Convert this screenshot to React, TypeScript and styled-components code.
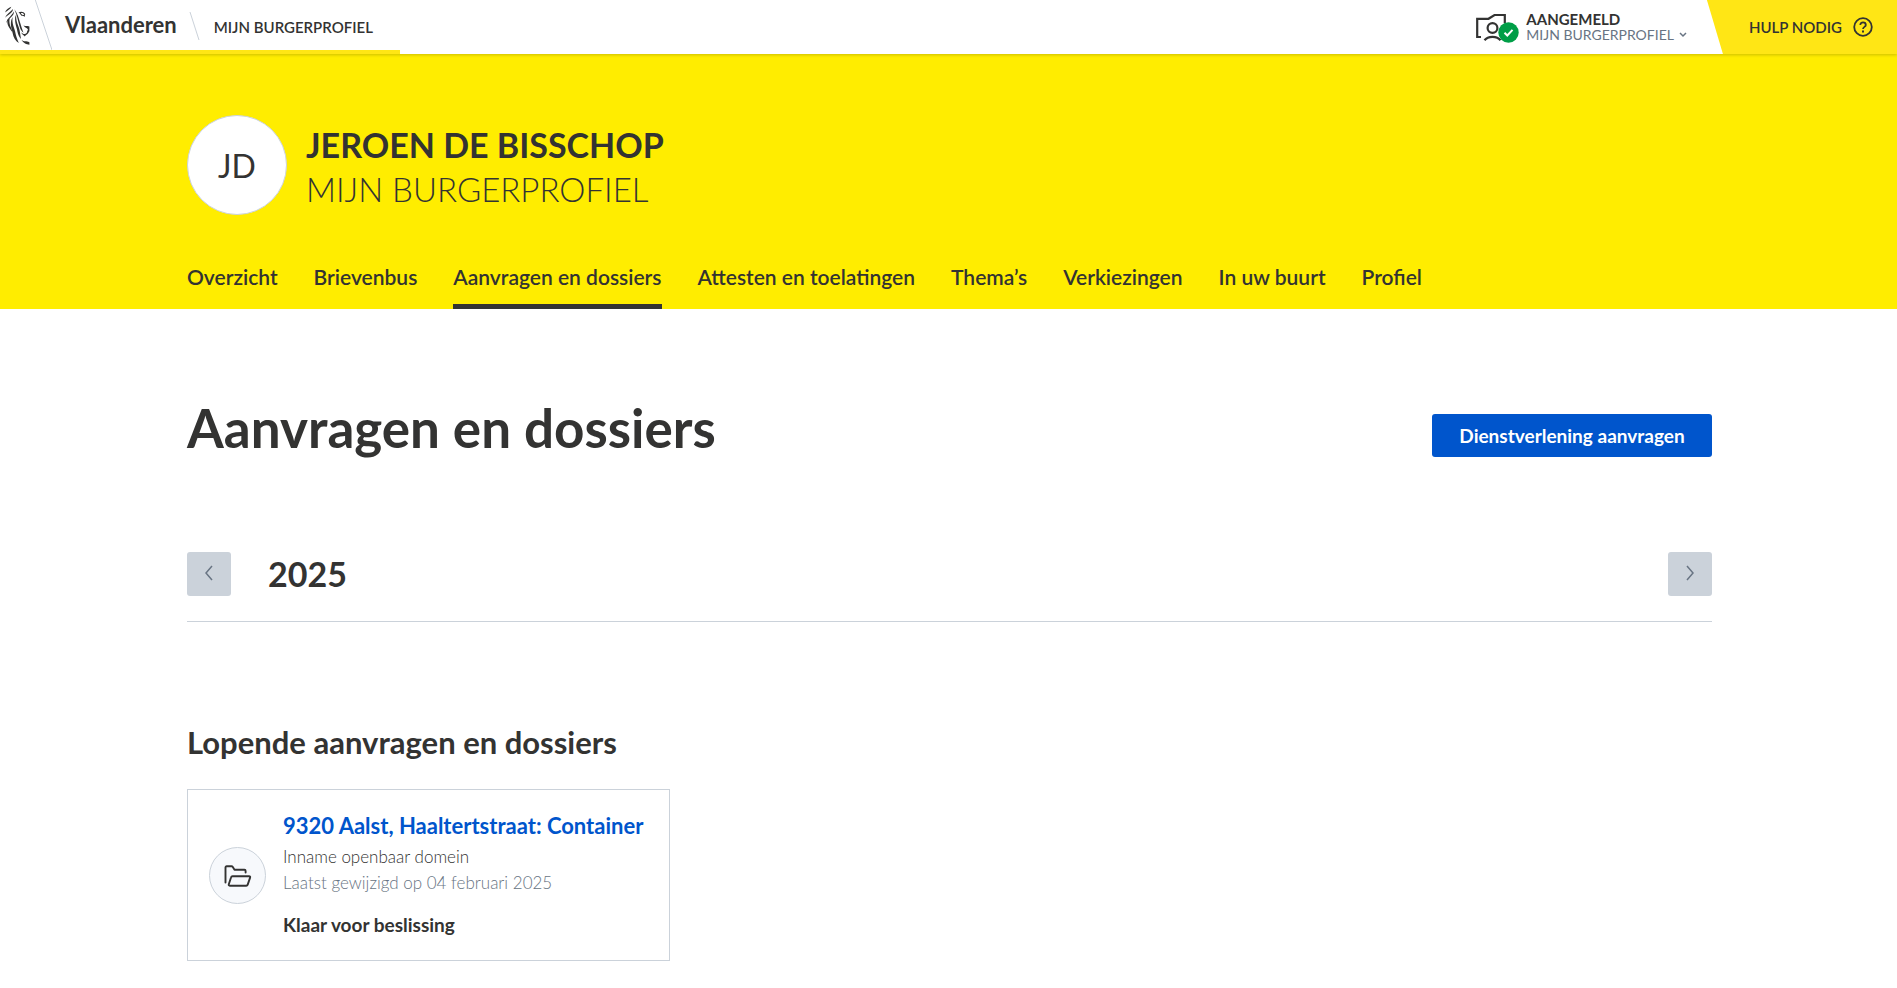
import React from 'react';
import styled, { createGlobalStyle, css } from 'styled-components';

const ink = '#333332';
const muted = '#687483';
const line = '#cbd2da';
const blue = '#0055cc';
const yellow = '#ffed00';
const barYellow = '#ffe615';

const GlobalStyle = createGlobalStyle`
  *, *::before, *::after { box-sizing: border-box; }
  body {
    margin: 0;
    background: #fff;
    color: ${ink};
    font-family: Lato, 'Liberation Sans', sans-serif;
  }
  h1, h2, h3, p { margin: 0; }
  a { color: inherit; text-decoration: none; }
  button { font-family: inherit; color: inherit; border: 0; padding: 0; cursor: pointer; }
  svg { display: block; flex: none; }
`;

const TopBar = styled.header`
  position: relative;
  z-index: 1;
  display: flex;
  justify-content: space-between;
  height: 54px;
  background: #fff;
  box-shadow: 0 1px 3px rgba(0, 0, 0, 0.2);
  &::after {
    content: '';
    position: absolute;
    left: 0;
    bottom: 0;
    width: 400px;
    height: 4px;
    background: ${barYellow};
  }
`;

const Brand = styled.div`
  display: flex;
  align-items: flex-start;
`;

const BrandNames = styled.div`
  display: flex;
  align-items: baseline;
  align-self: center;
  margin-left: 13px;
  padding-bottom: 2px;
`;

const BrandLink = styled.a`
  font-size: 22px;
  line-height: 28px;
  font-weight: 700;
`;

const Slash = styled.svg`
  align-self: center;
  margin: 0 14px 0 12px;
`;

const CapsLabel = styled.span`
  font-size: 15px;
  line-height: 20px;
  font-weight: 600;
`;

const Session = styled.div`
  display: flex;
`;

const Account = styled.button`
  display: flex;
  align-items: center;
  gap: 7px;
  margin-right: 20px;
  background: none;
  text-align: left;
`;

const AccountText = styled.span`
  display: flex;
  flex-direction: column;
  line-height: 16px;
`;

const AccountState = styled.span`
  font-size: 15px;
  font-weight: 700;
`;

const AccountContext = styled.span`
  display: flex;
  align-items: center;
  gap: 5px;
  font-size: 14px;
  color: ${muted};
`;

const Help = styled.a`
  display: flex;
  align-items: center;
  gap: 11px;
  padding: 0 24px 0 42px;
  background: ${barYellow};
  clip-path: polygon(0 0, 100% 0, 100% 100%, 16px 100%);
`;

const Hero = styled.div`
  padding: 61px 185px 0 187px;
  background: ${yellow};
`;

const Identity = styled.div`
  display: flex;
  align-items: center;
  gap: 19px;
  margin-bottom: 47px;
`;

const Avatar = styled.div`
  display: grid;
  place-items: center;
  width: 100px;
  height: 100px;
  border: 1px solid ${line};
  border-radius: 50%;
  background: #fff;
  font-size: 32px;
`;

const Names = styled.div`
  padding-top: 4px;
  line-height: 45px;
`;

const PersonName = styled.p`
  font-size: 34px;
  font-weight: 700;
`;

const ProfileName = styled.p`
  font-size: 33px;
  font-weight: 300;
`;

const Tabs = styled.nav`
  display: flex;
  gap: 36px;
`;

const Tab = styled.a<{ $active?: boolean }>`
  padding-bottom: 12px;
  border-bottom: 5px solid ${(p) => (p.$active ? ink : 'transparent')};
  font-size: 21px;
  line-height: 30px;
  font-weight: 600;
  white-space: nowrap;
`;

const Main = styled.main`
  padding: 89px 185px 24px 187px;
`;

const TitleRow = styled.div`
  display: flex;
  align-items: flex-end;
  justify-content: space-between;
  margin-bottom: 94px;
`;

const Title = styled.h1`
  font-size: 53px;
  line-height: 60px;
  font-weight: 700;
`;

const PrimaryButton = styled.button`
  min-width: 280px;
  height: 43px;
  margin-bottom: 1px;
  padding: 0 24px;
  border-radius: 3px;
  background: ${blue};
  && { color: #fff; }
  font-size: 19px;
  font-weight: 700;
`;

const YearRow = styled.div`
  display: flex;
  align-items: center;
  padding-bottom: 25px;
  border-bottom: 1px solid ${line};
`;

const Year = styled.h2`
  flex: 1;
  margin-left: 37px;
  font-size: 34px;
  line-height: 44px;
  font-weight: 700;
`;

const StepButton = styled.button`
  display: grid;
  place-items: center;
  width: 44px;
  height: 44px;
  padding-bottom: 2px;
  border-radius: 3px;
  background: ${line};
  && { color: ${muted}; }
`;

const SectionTitle = styled.h2`
  margin: 101px 0 28px;
  font-size: 31px;
  line-height: 38px;
  font-weight: 700;
`;

const CardGrid = styled.div`
  display: grid;
  grid-template-columns: repeat(3, 1fr);
  gap: 38px;
`;

const Card = styled.article`
  display: flex;
  align-items: center;
  gap: 17px;
  padding: 22px 21px 21px;
  border: 1px solid ${line};
`;

const CardIcon = styled.div`
  display: grid;
  place-items: center;
  flex: none;
  width: 57px;
  height: 57px;
  border: 1px solid ${line};
  border-radius: 50%;
  background: #f7f9fc;
`;

const CardTitle = styled.h3`
  margin-bottom: 4px;
  color: ${blue};
  font-size: 22px;
  line-height: 28px;
  font-weight: 700;
  white-space: nowrap;
`;

const CardLine = styled.p<{ $muted?: boolean }>`
  font-size: 17px;
  line-height: 26px;
  font-weight: 300;
  ${(p) => p.$muted && css`color: ${muted};`}
`;

const CardStatus = styled.p`
  margin-top: 15px;
  font-size: 19px;
  line-height: 28px;
  font-weight: 700;
`;

const Lion = () => (
  <svg width="52" height="50" viewBox="0 0 52 50" fill="none" aria-hidden="true">
    <g fill={ink}>
      <path d="M5 12.5C6 9.800 8.500 7.800 11.300 6.800C10.800 9 8 10.200 5 12.500Z" />
      <path d="M5 17.800C6.500 14 10 12.500 13 9C13 12.800 8.500 14.300 5 17.800Z" />
      <path d="M6.300 23C6.800 18.500 11 16.500 14 11.500C14.300 16 9 18 6.300 23Z" />
      <path d="M7.600 19.500C6.300 25 9.800 28.500 12.600 32.500C11.800 27.500 8.600 25.500 9.600 18.500Z" />
      <path d="M11.300 20C10 26 12 29 12.600 33C13.400 37.500 15.500 41 18.800 43C16.700 38.500 16 35.500 15 31C14 26.500 11.800 24 12.600 17Z" />
      <path d="M15.200 17C14.600 23.500 16.700 27 17.400 31.500C18 35 19.300 36.800 21 39C20.300 34.500 20 31.500 19 28C17.800 24 15.700 21 16.200 14.500Z" />
      <path d="M14.300 9.300C17.500 13 18.500 17.500 19.900 22C21.200 26 21.800 28.500 23.500 32.700C21.800 31.500 20.700 30 19.900 27.500C18 21 17 15 14.300 9.300Z" />
      <path d="M18.500 12.500C20.800 11 23.800 11.500 25.200 14L24.600 17C23.800 15.800 22.800 16.300 21.500 15.800C20.800 14.800 20 13.500 18.500 12.500ZM20.800 13.200C21.600 14.800 23 15.200 24.300 14.800C23.500 13.100 22.200 12.700 20.800 13.200Z" fillRule="evenodd" />
      <path d="M23.500 25.200C25.300 26.600 27.300 25.500 29.400 26.500V31.300C28.600 31.800 28.600 33.500 27 34.500C26.200 35 25.500 35.200 24.800 36.600C23.500 34.800 22.200 35 21 32.200C23 34.300 25.300 34.500 26.600 33C27.600 31.600 26.600 30.700 28 29.900C27.800 27.900 25 28 23.500 25.200Z" />
      <path d="M21.500 39.800C24 42.500 26.500 40.500 29.400 42.200V44.800C26.500 44.300 23.500 43.500 21.500 39.800Z" />
    </g>
    <path d="M35 -1L52 50" stroke={line} />
  </svg>
);

const SignedInIcon = () => (
  <svg width="43" height="32" viewBox="0 0 43 32" fill="none" aria-hidden="true">
    <g stroke={ink} strokeWidth="2.200">
      <path d="M5 26H1.200V7.800H12.500L18.500 4H28.800V12" />
      <circle cx="16.500" cy="17" r="4.900" />
      <path d="M8.500 29.300C12 24.800 21 24.800 24.500 29.300" />
    </g>
    <circle cx="32.500" cy="21.500" r="10.200" fill="#009e47" />
    <path d="M28.500 21.800L31.300 24.500L36.500 18.800" stroke="#fff" strokeWidth="2" />
  </svg>
);

const HelpIcon = () => (
  <svg width="20" height="20" viewBox="0 0 20 20" fill="none" stroke={ink} strokeWidth="1.800" aria-hidden="true">
    <circle cx="10" cy="10" r="8.800" />
    <path d="M7.300 8C7.300 4.500 12.800 4.700 12.800 7.900C12.800 9.900 10 9.900 10 12.100" />
    <path d="M10 13.400V15.400" strokeWidth="2" />
  </svg>
);

const Chevron = ({ d, width, height }: { d: string; width: number; height: number }) => (
  <svg width={width} height={height} viewBox={`0 0 ${width} ${height}`} fill="none" stroke="currentColor" strokeWidth="1.500" aria-hidden="true">
    <path d={d} />
  </svg>
);

const FolderIcon = () => (
  <svg width="28" height="22" viewBox="0 0 28 22" fill="none" stroke={ink} strokeWidth="1.900" strokeLinecap="round" strokeLinejoin="round" aria-hidden="true">
    <path d="M1.500 17.500V2.500Q1.500 1.300 2.700 1.300H7.500Q8.300 1.300 8.800 2L10.500 4.800H20.500Q21.600 4.800 21.600 5.900V7.500" />
    <path d="M8.500 11.200H25Q26.600 11.200 26.100 12.600L23.700 19.600Q23.300 20.700 22.200 20.700H5.800Q4.300 20.700 4.800 19.200L7.100 12.200Q7.400 11.200 8.500 11.200Z" />
  </svg>
);

const tabs = [
  'Overzicht',
  'Brievenbus',
  'Aanvragen en dossiers',
  'Attesten en toelatingen',
  'Thema’s',
  'Verkiezingen',
  'In uw buurt',
  'Profiel',
];

export default function App() {
  return (
    <>
      <GlobalStyle />
      <TopBar>
        <Brand>
          <Lion />
          <BrandNames>
            <BrandLink href="#">Vlaanderen</BrandLink>
            <Slash width="11" height="30" viewBox="0 0 11 30" stroke={line} aria-hidden="true">
              <path d="M1 1L10 29" />
            </Slash>
            <a href="#"><CapsLabel>MIJN BURGERPROFIEL</CapsLabel></a>
          </BrandNames>
        </Brand>
        <Session>
          <Account type="button">
            <SignedInIcon />
            <AccountText>
              <AccountState>AANGEMELD</AccountState>
              <AccountContext>
                MIJN BURGERPROFIEL
                <Chevron width={8} height={6} d="M1 1L4 4L7 1" />
              </AccountContext>
            </AccountText>
          </Account>
          <Help href="#">
            <CapsLabel>HULP NODIG</CapsLabel>
            <HelpIcon />
          </Help>
        </Session>
      </TopBar>

      <Hero>
        <Identity>
          <Avatar>JD</Avatar>
          <Names>
            <PersonName>JEROEN DE BISSCHOP</PersonName>
            <ProfileName>MIJN BURGERPROFIEL</ProfileName>
          </Names>
        </Identity>
        <Tabs>
          {tabs.map((tab) => (
            <Tab key={tab} href="#" $active={tab === 'Aanvragen en dossiers'}>{tab}</Tab>
          ))}
        </Tabs>
      </Hero>

      <Main>
        <TitleRow>
          <Title>Aanvragen en dossiers</Title>
          <PrimaryButton type="button">Dienstverlening aanvragen</PrimaryButton>
        </TitleRow>
        <YearRow>
          <StepButton type="button" aria-label="Vorig jaar">
            <Chevron width={10} height={16} d="M8 1L2 8L8 15" />
          </StepButton>
          <Year>2025</Year>
          <StepButton type="button" aria-label="Volgend jaar">
            <Chevron width={10} height={16} d="M2 1L8 8L2 15" />
          </StepButton>
        </YearRow>
        <SectionTitle>Lopende aanvragen en dossiers</SectionTitle>
        <CardGrid>
          <Card>
            <CardIcon><FolderIcon /></CardIcon>
            <div>
              <CardTitle><a href="#">9320 Aalst, Haaltertstraat: Container</a></CardTitle>
              <CardLine>Inname openbaar domein</CardLine>
              <CardLine $muted>Laatst gewijzigd op 04 februari 2025</CardLine>
              <CardStatus>Klaar voor beslissing</CardStatus>
            </div>
          </Card>
        </CardGrid>
      </Main>
    </>
  );
}
